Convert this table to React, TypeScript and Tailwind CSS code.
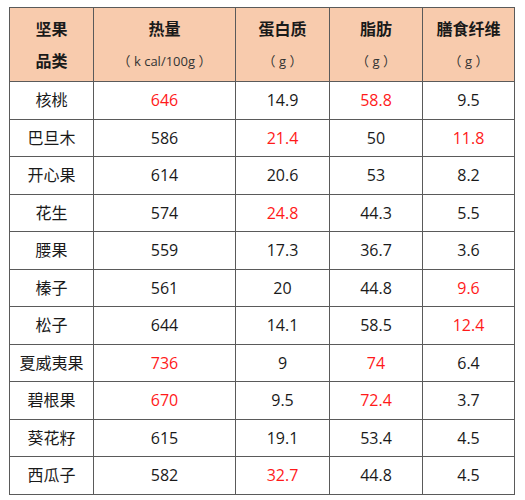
const rows: { name: string; cells: [string, boolean][] }[] = [
  { name: "核桃", cells: [["646", true], ["14.9", false], ["58.8", true], ["9.5", false]] },
  { name: "巴旦木", cells: [["586", false], ["21.4", true], ["50", false], ["11.8", true]] },
  { name: "开心果", cells: [["614", false], ["20.6", false], ["53", false], ["8.2", false]] },
  { name: "花生", cells: [["574", false], ["24.8", true], ["44.3", false], ["5.5", false]] },
  { name: "腰果", cells: [["559", false], ["17.3", false], ["36.7", false], ["3.6", false]] },
  { name: "榛子", cells: [["561", false], ["20", false], ["44.8", false], ["9.6", true]] },
  { name: "松子", cells: [["644", false], ["14.1", false], ["58.5", false], ["12.4", true]] },
  { name: "夏威夷果", cells: [["736", true], ["9", false], ["74", true], ["6.4", false]] },
  { name: "碧根果", cells: [["670", true], ["9.5", false], ["72.4", true], ["3.7", false]] },
  { name: "葵花籽", cells: [["615", false], ["19.1", false], ["53.4", false], ["4.5", false]] },
  { name: "西瓜子", cells: [["582", true], ["32.7", true], ["44.8", false], ["4.5", false]] },
];

// 西瓜子 582 is black in the picture
rows[10].cells[0][1] = false;

const headers = [
  { top: "坚果", bottom: "品类", unitBold: true },
  { top: "热量", bottom: "（ k cal/100g ）", unitBold: false },
  { top: "蛋白质", bottom: "（ g ）", unitBold: false },
  { top: "脂肪", bottom: "（ g ）", unitBold: false },
  { top: "膳食纤维", bottom: "（ g ）", unitBold: false },
];

const widths = ["w-[84px]", "w-[142px]", "w-[94px]", "w-[93px]", "w-[92px]"];

export default function App() {
  return (
    <div className="w-[525px] h-[500px] bg-white pt-[7px] pl-[9px] font-['Open_Sans','Noto_Sans_CJK_SC',sans-serif] text-[#1a1a1a]">
      <table className="border-collapse table-fixed">
        <thead>
          <tr className="bg-[#f8cbad]">
            {headers.map((h, i) => (
              <th key={i} className={`${widths[i]} h-[74px] p-0 border border-[#5a5a5a] align-middle`}>
                <div className="flex flex-col items-center gap-[12px]">
                  <span className="text-[16px] font-bold leading-[20px]">{h.top}</span>
                  <span
                    className={
                      h.unitBold
                        ? "text-[16px] font-bold leading-[20px]"
                        : "text-[13px] font-normal leading-[20px] text-[#333]"
                    }
                  >
                    {h.bottom}
                  </span>
                </div>
              </th>
            ))}
          </tr>
        </thead>
        <tbody>
          {rows.map((r) => (
            <tr key={r.name}>
              <td className="h-[37.5px] p-0 border border-[#5a5a5a] text-center text-[16px] leading-none">
                {r.name}
              </td>
              {r.cells.map(([v, red], j) => (
                <td
                  key={j}
                  className={`h-[37.5px] p-0 border border-[#5a5a5a] text-center text-[16px] leading-none ${
                    red ? "text-[#ff1a1a]" : ""
                  }`}
                >
                  {v}
                </td>
              ))}
            </tr>
          ))}
        </tbody>
      </table>
    </div>
  );
}
